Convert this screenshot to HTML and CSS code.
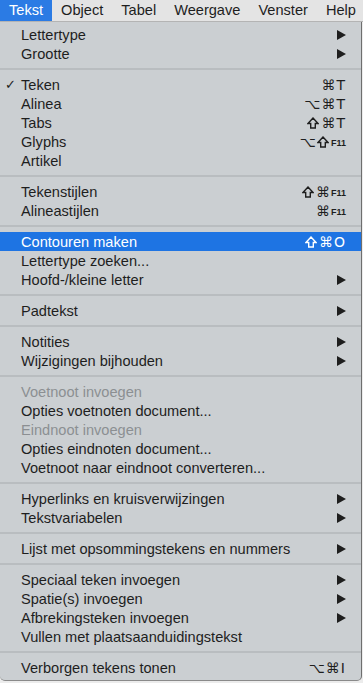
FILE: index.html
```html
<!DOCTYPE html>
<html>
    <head>
        <meta charset="utf-8">
        <link rel="stylesheet" href="styles.css">
    </head>
    <body>
        <nav class="menubar">
            <span class="title active">Tekst</span>
            <span class="title">Object</span>
            <span class="title">Tabel</span>
            <span class="title">Weergave</span>
            <span class="title">Venster</span>
            <span class="title">Help</span>
        </nav>
        <ul class="menu">
            <li class="item"><span class="mark"></span><span class="label">Lettertype</span><span class="arrow"></span></li>
            <li class="item"><span class="mark"></span><span class="label">Grootte</span><span class="arrow"></span></li>
            <li class="sep"></li>
            <li class="item"><span class="mark">✓</span><span class="label">Teken</span><span class="keys">⌘T</span></li>
            <li class="item"><span class="mark"></span><span class="label">Alinea</span><span class="keys">⌥⌘T</span></li>
            <li class="item"><span class="mark"></span><span class="label">Tabs</span><span class="keys"><svg class="shift" viewBox="0 0 12 12"><path d="M6 1 L11 6.5 H8.3 V11 H3.7 V6.5 H1 Z"/></svg>⌘T</span></li>
            <li class="item"><span class="mark"></span><span class="label">Glyphs</span><span class="keys">⌥<svg class="shift" viewBox="0 0 12 12"><path d="M6 1 L11 6.5 H8.3 V11 H3.7 V6.5 H1 Z"/></svg><small>F11</small></span></li>
            <li class="item"><span class="mark"></span><span class="label">Artikel</span></li>
            <li class="sep"></li>
            <li class="item"><span class="mark"></span><span class="label">Tekenstijlen</span><span class="keys"><svg class="shift" viewBox="0 0 12 12"><path d="M6 1 L11 6.5 H8.3 V11 H3.7 V6.5 H1 Z"/></svg>⌘<small>F11</small></span></li>
            <li class="item"><span class="mark"></span><span class="label">Alineastijlen</span><span class="keys">⌘<small>F11</small></span></li>
            <li class="sep"></li>
            <li class="item selected"><span class="mark"></span><span class="label">Contouren maken</span><span class="keys"><svg class="shift" viewBox="0 0 12 12"><path d="M6 1 L11 6.5 H8.3 V11 H3.7 V6.5 H1 Z"/></svg>⌘O</span></li>
            <li class="item"><span class="mark"></span><span class="label">Lettertype zoeken...</span></li>
            <li class="item"><span class="mark"></span><span class="label">Hoofd-/kleine letter</span><span class="arrow"></span></li>
            <li class="sep"></li>
            <li class="item"><span class="mark"></span><span class="label">Padtekst</span><span class="arrow"></span></li>
            <li class="sep"></li>
            <li class="item"><span class="mark"></span><span class="label">Notities</span><span class="arrow"></span></li>
            <li class="item"><span class="mark"></span><span class="label">Wijzigingen bijhouden</span><span class="arrow"></span></li>
            <li class="sep"></li>
            <li class="item disabled"><span class="mark"></span><span class="label">Voetnoot invoegen</span></li>
            <li class="item"><span class="mark"></span><span class="label">Opties voetnoten document...</span></li>
            <li class="item disabled"><span class="mark"></span><span class="label">Eindnoot invoegen</span></li>
            <li class="item"><span class="mark"></span><span class="label">Opties eindnoten document...</span></li>
            <li class="item"><span class="mark"></span><span class="label">Voetnoot naar eindnoot converteren...</span></li>
            <li class="sep"></li>
            <li class="item"><span class="mark"></span><span class="label">Hyperlinks en kruisverwijzingen</span><span class="arrow"></span></li>
            <li class="item"><span class="mark"></span><span class="label">Tekstvariabelen</span><span class="arrow"></span></li>
            <li class="sep"></li>
            <li class="item"><span class="mark"></span><span class="label">Lijst met opsommingstekens en nummers</span><span class="arrow"></span></li>
            <li class="sep"></li>
            <li class="item"><span class="mark"></span><span class="label">Speciaal teken invoegen</span><span class="arrow"></span></li>
            <li class="item"><span class="mark"></span><span class="label">Spatie(s) invoegen</span><span class="arrow"></span></li>
            <li class="item"><span class="mark"></span><span class="label">Afbrekingsteken invoegen</span><span class="arrow"></span></li>
            <li class="item"><span class="mark"></span><span class="label">Vullen met plaatsaanduidingstekst</span></li>
            <li class="sep"></li>
            <li class="item"><span class="mark"></span><span class="label">Verborgen tekens tonen</span><span class="keys">⌥⌘I</span></li>
        </ul>
    </body>
</html>
```
FILE: styles.css
```css
body{
    margin: 0;
    background: #ececec;
    font-family: "Liberation Sans", Arial, sans-serif;
    font-size: 14.6px;
    color: #1e1e1e;
    overflow: hidden;
}
.menubar{
    display: flex;
    height: 21px;
    background: #e4e4e4;
    border-bottom: 1px solid #b4b4b4;
    align-items: center;
    font-size: 14.6px;
}
.title{
    height: 21px;
    line-height: 21px;
    padding: 0 9px;
}
.title.active{
    background: #2b7be4;
    color: white;
}
.menu{
    list-style: none;
    margin: 0;
    padding: 3px 0 3px 0;
    width: 361px;
    background: #cbcfd2;
    border-right: 1px solid #6e6e6e;
    border-bottom: 1px solid #8a8a8a;
    border-radius: 0 0 5px 5px;
}
.item{
    display: flex;
    align-items: center;
    height: 19px;
    padding-right: 15px;
}
.mark{
    width: 21px;
    text-align: center;
    font-family: "DejaVu Sans", sans-serif;
    font-size: 13px;
}
.label{
    flex: 1;
    white-space: nowrap;
}
.keys{
    display: flex;
    align-items: center;
    font-family: "DejaVu Sans", sans-serif;
    font-size: 14px;
    letter-spacing: 1px;
}
.keys small{
    font-family: "Liberation Sans", Arial, sans-serif;
    font-weight: bold;
    font-size: 9px;
    letter-spacing: 0;
    margin-top: 2px;
}
.shift{
    width: 12px;
    height: 12px;
    margin-right: 2px;
    fill: none;
    stroke: currentColor;
    stroke-width: 1.4;
    stroke-linejoin: miter;
}
.arrow{
    width: 0;
    height: 0;
    border-left: 9px solid #1e1e1e;
    border-top: 5px solid transparent;
    border-bottom: 5px solid transparent;
}
.sep{
    height: 2px;
    margin: 5px 0;
    background: #b9bdc0;
}
.selected{
    background: #1e74e3;
    color: white;
}
.disabled{
    color: #8c8f92;
}
```
